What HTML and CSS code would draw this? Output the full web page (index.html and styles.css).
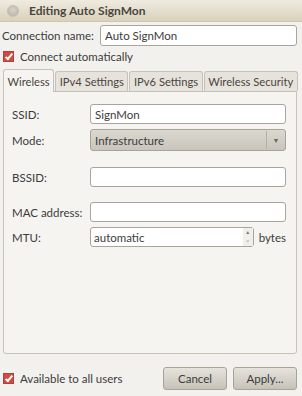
FILE: index.html
```html
<!DOCTYPE html>
<html>
<head>
    <title>Editing Auto SignMon</title>
    <link rel="stylesheet" href="styles.css">
</head>
<body>
    <div class="titlebar">
        <span class="close-button"></span>
        <span class="title">Editing Auto SignMon</span>
    </div>

    <div class="content">
        <div class="name-row">
            <label for="conn-name">Connection name:</label>
            <input type="text" id="conn-name" class="entry" value="Auto SignMon">
        </div>

        <div class="check-row">
            <span class="checkbox"></span>
            <span>Connect automatically</span>
        </div>

        <div class="tabs">
            <div class="tab active">Wireless</div>
            <div class="tab">IPv4 Settings</div>
            <div class="tab">IPv6 Settings</div>
            <div class="tab">Wireless Security</div>
        </div>

        <div class="panel">
            <div class="field">
                <label>SSID:</label>
                <input type="text" class="entry" value="SignMon">
            </div>
            <div class="field">
                <label>Mode:</label>
                <div class="combo">
                    <span class="combo-text">Infrastructure</span>
                    <span class="combo-arrow">&#9660;</span>
                </div>
            </div>
            <div class="field bssid">
                <label>BSSID:</label>
                <input type="text" class="entry">
            </div>
            <div class="field mac">
                <label>MAC address:</label>
                <input type="text" class="entry">
            </div>
            <div class="field">
                <label>MTU:</label>
                <div class="spin">
                    <span class="spin-text">automatic</span>
                    <span class="spin-buttons">
                        <span class="up">&#9650;</span>
                        <span class="down">&#9660;</span>
                    </span>
                </div>
                <span class="unit">bytes</span>
            </div>
        </div>

        <div class="bottom-row">
            <div class="check-row">
                <span class="checkbox"></span>
                <span>Available to all users</span>
            </div>
            <div class="buttons">
                <button type="button">Cancel</button>
                <button type="button">Apply...</button>
            </div>
        </div>
    </div>
</body>
</html>
```

FILE: styles.css
```css
body {
    margin: 0;
    width: 302px;
    height: 396px;
    background-color: #f2f1ed;
    font-family: Lato, sans-serif;
    font-size: 11.5px;
    color: #3c3c3c;
    overflow: hidden;
    white-space: nowrap;
}

.titlebar {
    display: flex;
    align-items: center;
    height: 21px;
    padding-left: 7px;
    background: linear-gradient(#efebe0, #d9d1bb);
    border-bottom: 1px solid #cfc7b0;
}

.close-button {
    width: 12px;
    height: 12px;
    border-radius: 50%;
    background: radial-gradient(circle at 50% 40%, #d8d4cb, #b6b1a6);
    border: 1px solid #c4bfb4;
    box-sizing: border-box;
}

.title {
    margin-left: 10px;
    font-weight: bold;
    font-size: 12px;
    color: #4a4640;
}

.content {
    padding: 2px 5px 0 3px;
}

.name-row {
    display: flex;
    align-items: center;
    height: 22px;
}

.name-row label {
    width: 98px;
    flex-shrink: 0;
    margin-left: -1px;
}

.entry {
    flex: 1;
    min-width: 0;
    height: 20px;
    box-sizing: border-box;
    border: 1px solid #a9a59c;
    border-radius: 3px;
    background: #fff;
    padding: 0 4px;
    font-family: Lato, sans-serif;
    font-size: 11.5px;
    color: #3c3c3c;
}

.name-row .entry {
    height: 21px;
}

.check-row {
    display: flex;
    align-items: center;
    height: 20px;
}

.checkbox {
    width: 9px;
    height: 9px;
    margin-right: 6px;
    border: 1px solid #a44;
    background: #d24b3e;
    position: relative;
}

.checkbox::after {
    content: "";
    position: absolute;
    left: 3px;
    top: 0;
    width: 2px;
    height: 6px;
    border: solid #fff;
    border-width: 0 2px 2px 0;
    transform: rotate(40deg);
}

.tabs {
    display: flex;
    align-items: flex-end;
    height: 25px;
}

.tab {
    flex-shrink: 0;
    height: 19px;
    padding: 0 3.5px;
    display: flex;
    align-items: center;
    background: #e6e3dc;
    border: 1px solid #c6c2b9;
    border-bottom: none;
    border-radius: 3px 3px 0 0;
    font-size: 11.2px;
    color: #4a4640;
}

.tab + .tab {
    margin-left: 1px;
}

.tab.active {
    height: 22px;
    background: #f5f4f0;
    position: relative;
    top: 1px;
}

.panel {
    height: 263px;
    box-sizing: border-box;
    border: 1px solid #c6c2b9;
    border-radius: 0 0 3px 3px;
    background: #f5f4f0;
    padding: 12px 10px 0 8px;
}

.field {
    display: flex;
    align-items: center;
    margin-top: 5px;
}

.field:first-child {
    margin-top: 0;
}

.field.bssid {
    margin-top: 16px;
}

.field.mac {
    margin-top: 15px;
}

.field label {
    width: 78px;
    flex-shrink: 0;
}

.combo {
    flex: 1;
    height: 22px;
    box-sizing: border-box;
    display: flex;
    align-items: center;
    border: 1px solid #a8a398;
    border-radius: 3px;
    background: linear-gradient(#dbd8d0, #c9c5bc);
}

.combo-text {
    flex: 1;
    padding-left: 4px;
}

.combo-arrow {
    width: 18px;
    height: 18px;
    display: flex;
    align-items: center;
    justify-content: center;
    border-left: 1px solid #b5b0a6;
    font-size: 7px;
    color: #6a665e;
}

.spin {
    width: 164px;
    height: 20px;
    box-sizing: border-box;
    display: flex;
    align-items: center;
    border: 1px solid #a9a59c;
    border-radius: 3px;
    background: #fff;
}

.spin-text {
    flex: 1;
    padding-left: 3px;
}

.spin-buttons {
    width: 10px;
    height: 18px;
    display: flex;
    flex-direction: column;
    align-items: center;
    font-size: 5px;
    line-height: 9px;
    color: #7a766e;
    background: #f0efeb;
}

.spin-buttons .down {
    color: #c7c3bb;
}

.unit {
    margin-left: 5px;
}

.bottom-row {
    display: flex;
    align-items: center;
    justify-content: space-between;
    margin-top: 13px;
}

.buttons {
    display: flex;
    gap: 6px;
}

button {
    width: 64px;
    height: 23px;
    border: 1px solid #a8a398;
    border-radius: 3px;
    background: linear-gradient(#e6e3dc, #c6c2b8);
    font-family: Lato, sans-serif;
    font-size: 11.5px;
    color: #3c3c3c;
}
```
